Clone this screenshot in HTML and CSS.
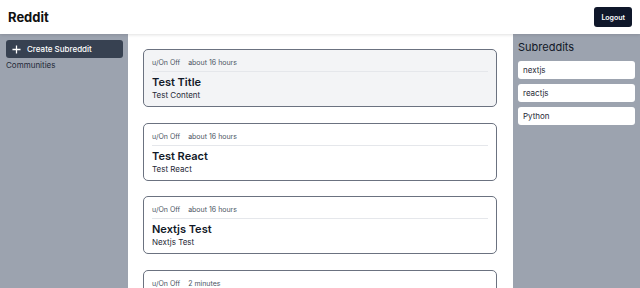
FILE: index.html
```html
<!DOCTYPE html>
<html>
<head>
<meta charset="utf-8">
<link rel="stylesheet" href="styles.css">
</head>
<body>
<header class="topbar">
  <div class="brand">Reddit</div>
  <button class="logout">Logout</button>
</header>
<main class="layout">
  <aside class="left">
    <button class="create"><svg width="9" height="9" viewBox="0 0 10 10"><path d="M5 0.5V9.5M0.5 5H9.5" stroke="#fff" stroke-width="1.4"/></svg><span>Create Subreddit</span></button>
    <div class="communities">Communities</div>
  </aside>
  <section class="feed">
    <article class="card hover">
      <div class="meta"><span>u/On Off</span><span>about 16 hours</span></div>
      <h2 class="title">Test Title</h2>
      <p class="body">Test Content</p>
    </article>
    <article class="card">
      <div class="meta"><span>u/On Off</span><span>about 16 hours</span></div>
      <h2 class="title">Test React</h2>
      <p class="body">Test React</p>
    </article>
    <article class="card">
      <div class="meta"><span>u/On Off</span><span>about 16 hours</span></div>
      <h2 class="title">Nextjs Test</h2>
      <p class="body">Nextjs Test</p>
    </article>
    <article class="card">
      <div class="meta"><span>u/On Off</span><span>2 minutes</span></div>
      <h2 class="title">Test</h2>
      <p class="body">Test</p>
    </article>
  </section>
  <aside class="right">
    <h3 class="subhead">Subreddits</h3>
    <div class="sub">nextjs</div>
    <div class="sub">reactjs</div>
    <div class="sub">Python</div>
  </aside>
</main>
</body>
</html>
```
FILE: styles.css
```css
* { box-sizing: border-box; }
html, body { margin: 0; padding: 0; height: 100%; }
body {
  font-family: Inter, "Noto Sans", sans-serif;
  color: #111827;
  background: #fff;
  overflow: hidden;
}
.topbar {
  height: 34px;
  display: flex;
  align-items: center;
  justify-content: space-between;
  padding: 0 8px;
  background: #fff;
  box-shadow: 0 1px 3px rgba(0,0,0,0.12);
  position: relative;
  z-index: 1;
}
.brand { font-size: 13px; font-weight: 700; color: #111; }
.logout {
  height: 20px;
  padding: 0 7px;
  border: none;
  border-radius: 3px;
  background: #0f172a;
  color: #fff;
  font-family: inherit;
  font-size: 7px;
  font-weight: 600;
}
.layout {
  display: grid;
  grid-template-columns: 128px 1fr 127px;
  height: calc(100% - 34px);
  overflow: hidden;
}
.left { background: #9ca3af; padding: 6px 5px 0 6px; }
.create {
  width: 117px;
  height: 18px;
  display: flex;
  align-items: center;
  gap: 6px;
  padding: 0 6px;
  border: none;
  border-radius: 3px;
  background: #374151;
  color: #fff;
  font-family: inherit;
  font-size: 8px;
  font-weight: 500;
}
.communities { font-size: 8px; color: #1f2937; margin-top: 2px; }
.feed {
  padding: 15px 16px 0 15px;
  display: flex;
  flex-direction: column;
  gap: 15.67px;
  overflow: hidden;
}
.card {
  height: 58px;
  flex: none;
  border: 1px solid #6b7280;
  border-radius: 5px;
  padding: 8px 8px 0 8px;
  background: #fff;
}
.card.hover { background: #f3f4f6; }
.meta {
  display: flex;
  gap: 8px;
  font-size: 7px;
  line-height: 9px;
  font-weight: 400;
  color: #4b5563;
  padding-bottom: 4px;
  border-bottom: 1px solid #e5e7eb;
}
.title { margin: 3px 0 0; font-size: 11px; font-weight: 600; line-height: 14px; }
.body { margin: 1px 0 0; font-size: 8px; color: #1f2937; line-height: 10px; }
.right { background: #9ca3af; padding: 6px 5px 0 5px; }
.subhead { margin: 0 0 7px; font-size: 11px; font-weight: 400; color: #111827; line-height: 14px; }
.sub {
  height: 18px;
  margin-bottom: 5px;
  background: #fff;
  border-radius: 3px;
  padding: 0 5px;
  display: flex;
  align-items: center;
  font-size: 8px;
  color: #1f2937;
}
```
